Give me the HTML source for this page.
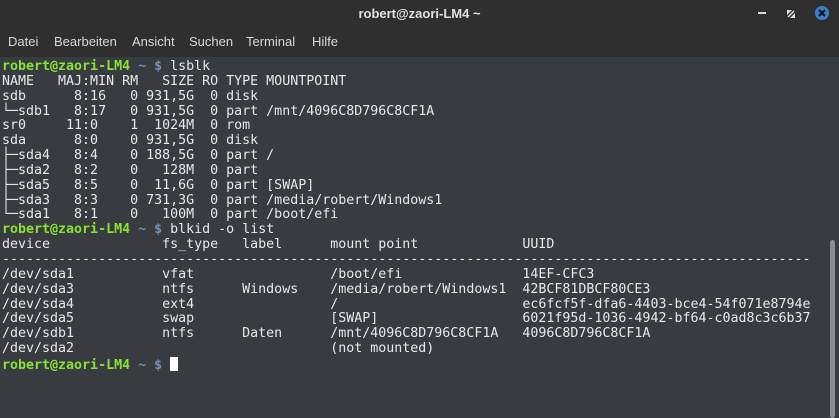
<!DOCTYPE html>
<html><head><style>
body{margin:0;width:839px;height:418px;overflow:hidden;background:#383b40;font-family:"Liberation Sans",sans-serif}
.title{position:absolute;left:0;top:0;width:839px;height:30px;background:#2f2f2f;color:#e0e0e0;font-weight:bold;font-size:13px;text-align:center;line-height:28px}
.menu{position:absolute;left:0;top:30px;width:839px;height:27px;background:#2f2f2f;color:#d8d8d8;font-size:13px;line-height:24px}
.menu span{position:absolute;top:0}
pre{position:absolute;left:2px;top:60px;margin:0;font-family:"DejaVu Sans Mono",monospace;font-size:13.3px;line-height:14.85px;color:#e8e8e8}
.g{color:#8ae234;font-weight:bold}.b{color:#7a8fa8;font-weight:bold}
.cur{display:inline-block;width:8px;height:14px;background:#fff;vertical-align:-2px}
.sb{position:absolute;left:830px;top:240px;width:5px;height:178px;background:#8a8c90;border-radius:3px}
</style></head><body>
<div class="title">robert@zaori-LM4 ~</div>
<svg style="position:absolute;left:0;top:0" width="839" height="30">
<rect x="758" y="12" width="8" height="2" fill="#ddd"/>
<path d="M787 10h5l-5 5zM795 18h-5l5-5z" fill="#ddd"/><path d="M788 17l6-6" stroke="#ddd" stroke-width="1.5"/>
<circle cx="822" cy="13" r="7" fill="#3d7ecf"/><path d="M819 10l6 6M825 10l-6 6" stroke="#111" stroke-width="2"/>
</svg>
<div class="menu"><span style="left:8px">Datei</span><span style="left:54px">Bearbeiten</span><span style="left:132px">Ansicht</span><span style="left:189px">Suchen</span><span style="left:246px">Terminal</span><span style="left:312px">Hilfe</span></div>
<pre><span class="g">robert@zaori-LM4</span> <span class="b">~ $</span> lsblk
NAME   MAJ:MIN RM   SIZE RO TYPE MOUNTPOINT
sdb      8:16   0 931,5G  0 disk 
└─sdb1   8:17   0 931,5G  0 part /mnt/4096C8D796C8CF1A
sr0     11:0    1  1024M  0 rom  
sda      8:0    0 931,5G  0 disk 
├─sda4   8:4    0 188,5G  0 part /
├─sda2   8:2    0   128M  0 part 
├─sda5   8:5    0  11,6G  0 part [SWAP]
├─sda3   8:3    0 731,3G  0 part /media/robert/Windows1
└─sda1   8:1    0   100M  0 part /boot/efi
<span class="g">robert@zaori-LM4</span> <span class="b">~ $</span> blkid -o list
device              fs_type   label      mount point             UUID
-----------------------------------------------------------------------------------------------------
/dev/sda1           vfat                 /boot/efi               14EF-CFC3
/dev/sda3           ntfs      Windows    /media/robert/Windows1  42BCF81DBCF80CE3
/dev/sda4           ext4                 /                       ec6fcf5f-dfa6-4403-bce4-54f071e8794e
/dev/sda5           swap                 [SWAP]                  6021f95d-1036-4942-bf64-c0ad8c3c6b37
/dev/sdb1           ntfs      Daten      /mnt/4096C8D796C8CF1A   4096C8D796C8CF1A
/dev/sda2                                (not mounted)
<span class="g">robert@zaori-LM4</span> <span class="b">~ $</span> <span class="cur"></span></pre>
<div class="sb"></div>
</body></html>
